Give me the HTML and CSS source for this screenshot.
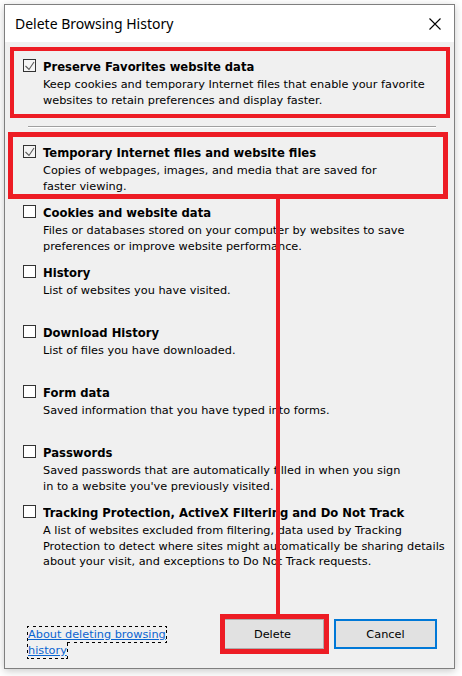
FILE: index.html
```html
<!DOCTYPE html>
<html>
<head>
<meta charset="utf-8">
<title>Delete Browsing History</title>
<link rel="stylesheet" href="styles.css">
</head>
<body>
<div class="window">
  <div class="titlebar">
    <span class="caption">Delete Browsing History</span>
    <svg class="close" width="12" height="12" viewBox="0 0 12 12"><path d="M0.5 0.5L11.5 11.5M11.5 0.5L0.5 11.5" stroke="#000" stroke-width="1.1" fill="none"/></svg>
  </div>
  <div class="content">
    <div class="row">
      <span class="cb checked"><svg width="11" height="11" viewBox="0 0 11 11"><path d="M1.5 6L5 9.5L10 2" stroke="#5a5a5a" stroke-width="1.1" fill="none"/></svg></span>
      <div class="text">
        <div class="title">Preserve Favorites website data</div>
        <div class="desc">Keep cookies and temporary Internet files that enable your favorite<br>websites to retain preferences and display faster.</div>
      </div>
    </div>
    <div class="sep"></div>
    <div class="row">
      <span class="cb checked"><svg width="11" height="11" viewBox="0 0 11 11"><path d="M1.5 6L5 9.5L10 2" stroke="#5a5a5a" stroke-width="1.1" fill="none"/></svg></span>
      <div class="text">
        <div class="title">Temporary Internet files and website files</div>
        <div class="desc">Copies of webpages, images, and media that are saved for<br>faster viewing.</div>
      </div>
    </div>
    <div class="row">
      <span class="cb"></span>
      <div class="text">
        <div class="title">Cookies and website data</div>
        <div class="desc">Files or databases stored on your computer by websites to save<br>preferences or improve website performance.</div>
      </div>
    </div>
    <div class="row">
      <span class="cb"></span>
      <div class="text">
        <div class="title">History</div>
        <div class="desc">List of websites you have visited.</div>
      </div>
    </div>
    <div class="row">
      <span class="cb"></span>
      <div class="text">
        <div class="title">Download History</div>
        <div class="desc">List of files you have downloaded.</div>
      </div>
    </div>
    <div class="row">
      <span class="cb"></span>
      <div class="text">
        <div class="title">Form data</div>
        <div class="desc">Saved information that you have typed into forms.</div>
      </div>
    </div>
    <div class="row">
      <span class="cb"></span>
      <div class="text">
        <div class="title">Passwords</div>
        <div class="desc">Saved passwords that are automatically filled in when you sign<br>in to a website you've previously visited.</div>
      </div>
    </div>
    <div class="row">
      <span class="cb"></span>
      <div class="text">
        <div class="title clip">Tracking Protection, ActiveX Filtering and Do Not Track data</div>
        <div class="desc">A list of websites excluded from filtering, data used by Tracking<br>Protection to detect where sites might automatically be sharing details<br>about your visit, and exceptions to Do Not Track requests.</div>
      </div>
    </div>
    <div class="footer">
      <div class="linkwrap"><a class="link" href="#">About deleting browsing<br>history</a></div>
      <div class="buttons">
        <button class="btn">Delete</button>
        <button class="btn default">Cancel</button>
      </div>
    </div>
  </div>
</div>
<div class="mark mark-1"></div>
<div class="mark mark-2"></div>
<div class="mark mark-line"></div>
<div class="mark mark-3"></div>
</body>
</html>
```
FILE: styles.css
```css
html, body {
  margin: 0;
  padding: 0;
  background: #ffffff;
}
body {
  position: relative;
  width: 462px;
  height: 676px;
  overflow: hidden;
  font-family: "DejaVu Sans", sans-serif;
  color: #000;
}
.window {
  box-sizing: border-box;
  margin: 4px 0 0 4px;
  width: 451px;
  height: 665px;
  border: 1px solid #7f7f7f;
  background: #f0f0f0;
  box-shadow: 0 2px 8px rgba(0, 0, 0, 0.22);
  display: flex;
  flex-direction: column;
}
.titlebar {
  height: 37px;
  flex: none;
  background: #fff;
  display: flex;
  align-items: center;
  justify-content: space-between;
  padding: 0 13px 0 10px;
}
.caption {
  font-family: "Noto Sans", sans-serif;
  font-size: 14px;
  color: #000;
}
.close {
  display: block;
  margin-top: 0;
}
.content {
  flex: 1;
  padding: 17px 0 0 18px;
}
.row {
  display: flex;
  gap: 7px;
  height: 60px;
}
.cb {
  box-sizing: border-box;
  flex: none;
  width: 13px;
  height: 13px;
  border: 1px solid #333;
  background: #fff;
  display: flex;
  align-items: center;
  justify-content: center;
}
.cb.checked {
  background: #f4f4f4;
}
.cb svg {
  display: block;
}
.text {
  min-width: 0;
}
.title {
  font-weight: bold;
  font-size: 11.6px;
  line-height: 16px;
  white-space: nowrap;
}
.title.clip {
  width: 362px;
  overflow: hidden;
}
.desc {
  margin-top: 2px;
  font-size: 11.3px;
  line-height: 15.7px;
  white-space: nowrap;
}
.sep {
  margin: 7px 18px 17px 5px;
  height: 0;
  border-top: 1px solid #a0a0a0;
  border-bottom: 1px solid #fff;
}
.footer {
  margin-top: 54px;
  display: flex;
  justify-content: space-between;
  align-items: flex-start;
  padding-right: 17px;
}
.linkwrap {
  margin: 8px 0 0 5px;
  font-size: 11.3px;
  line-height: 16px;
}
.link {
  color: #0a64d0;
  text-decoration: underline;
  outline: 1px dotted #000;
  padding: 1px 0;
}
.buttons {
  display: flex;
  gap: 10px;
}
.btn {
  box-sizing: border-box;
  width: 103px;
  height: 30px;
  background: #e1e1e1;
  border: 1px solid #adadad;
  font-family: "DejaVu Sans", sans-serif;
  font-size: 11.3px;
  color: #000;
  padding: 0;
}
.btn.default {
  border: 2px solid #0078d7;
}
.mark {
  position: absolute;
  box-sizing: border-box;
  border: 4px solid #ed1c24;
}
.mark-1 {
  left: 10px;
  top: 47px;
  width: 440px;
  height: 71px;
}
.mark-2 {
  left: 8px;
  top: 132px;
  width: 440px;
  height: 67px;
  border-width: 5px;
}
.mark-line {
  left: 276px;
  top: 198px;
  width: 4px;
  height: 417px;
  border: none;
  background: #ed1c24;
}
.mark-3 {
  left: 220px;
  top: 614px;
  width: 109px;
  height: 40px;
  border-width: 5px;
}
```
